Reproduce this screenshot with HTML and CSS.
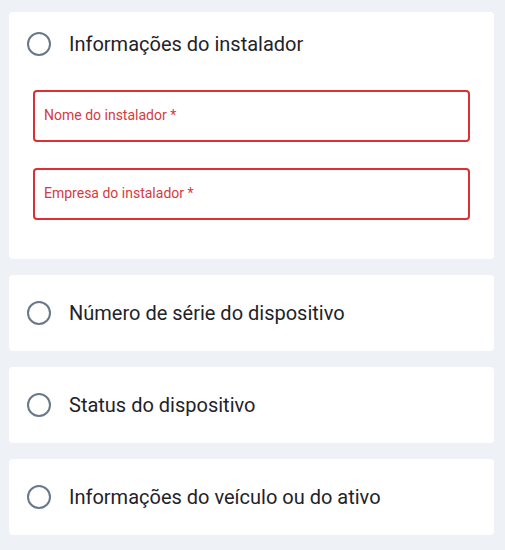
FILE: index.html
```html
<!DOCTYPE html>
<html lang="pt">
<head>
<meta charset="utf-8">
<link rel="stylesheet" href="styles.css">
</head>
<body>
<div class="list">
  <section class="card card-open">
    <div class="head">
      <span class="radio"></span>
      <span class="title">Informações do instalador</span>
    </div>
    <div class="fields">
      <div class="field"><span class="label">Nome do instalador *</span></div>
      <div class="field"><span class="label">Empresa do instalador *</span></div>
    </div>
  </section>
  <section class="card">
    <div class="head">
      <span class="radio"></span>
      <span class="title">Número de série do dispositivo</span>
    </div>
  </section>
  <section class="card">
    <div class="head">
      <span class="radio"></span>
      <span class="title">Status do dispositivo</span>
    </div>
  </section>
  <section class="card">
    <div class="head">
      <span class="radio"></span>
      <span class="title">Informações do veículo ou do ativo</span>
    </div>
  </section>
</div>
</body>
</html>
```
FILE: styles.css
```css
html, body {
  margin: 0;
  padding: 0;
  background: #eef1f6;
  font-family: Roboto, "Noto Sans", sans-serif;
}
.list {
  display: flex;
  flex-direction: column;
  gap: 16px;
  padding: 12px 11px 12px 9px;
}
.card {
  background: #ffffff;
  border-radius: 4px;
  height: 76px;
  box-sizing: border-box;
  display: flex;
  flex-direction: column;
  justify-content: center;
  padding: 0 18px;
}
.card-open {
  height: auto;
  justify-content: flex-start;
  padding: 20px 24px 39px 18px;
}
.head {
  display: flex;
  align-items: center;
  height: 24px;
}
.radio {
  width: 20px;
  height: 20px;
  border: 2px solid #69788a;
  border-radius: 50%;
  flex: none;
}
.title {
  margin-left: 18px;
  font-size: 20px;
  color: #1f2329;
}
.fields {
  display: flex;
  flex-direction: column;
  gap: 26px;
  margin-top: 34px;
  padding-left: 6px;
}
.field {
  height: 52px;
  box-sizing: border-box;
  border: 2px solid #dc2f34;
  border-radius: 4px;
  display: flex;
  align-items: center;
  padding: 0 9px;
}
.label {
  font-size: 14px;
  color: #d63a3f;
  margin-top: -2px;
}
```
